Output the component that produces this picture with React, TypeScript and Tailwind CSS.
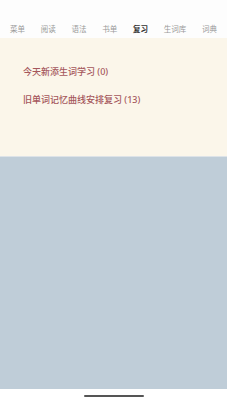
const TABS = ["菜单", "阅读", "语法", "书单", "复习", "生词库", "词典"];

export default function App() {
  return (
    <div
      className="flex h-[403px] w-[227px] flex-col bg-white"
      style={{ fontFamily: '"Noto Sans", "Noto Sans CJK SC", sans-serif' }}
    >
      <div className="flex h-[38px] items-end justify-around bg-[#fdfdfd] px-[2px] pb-[4px]">
        {TABS.map((t) => (
          <span
            key={t}
            className={
              t === "复习"
                ? "text-[7.5px] font-bold leading-[10px] text-[#333]"
                : "text-[7.5px] leading-[10px] text-[#999]"
            }
          >
            {t}
          </span>
        ))}
      </div>
      <div className="flex h-[119px] flex-col gap-[18px] border-b border-[#dde3e8] bg-[#fbf6ea] pl-[23px] pt-[29px] text-[9px] font-medium leading-[10px] text-[#a5575c]">
        <div>今天新添生词学习 (0)</div>
        <div>旧单词记忆曲线安排复习 (13)</div>
      </div>
      <div className="flex-1 bg-[#bfcdd8]" />
      <div className="flex h-[14px] items-center justify-center bg-white">
        <div className="h-[2px] w-[60px] rounded-full bg-[#555]" />
      </div>
    </div>
  );
}
